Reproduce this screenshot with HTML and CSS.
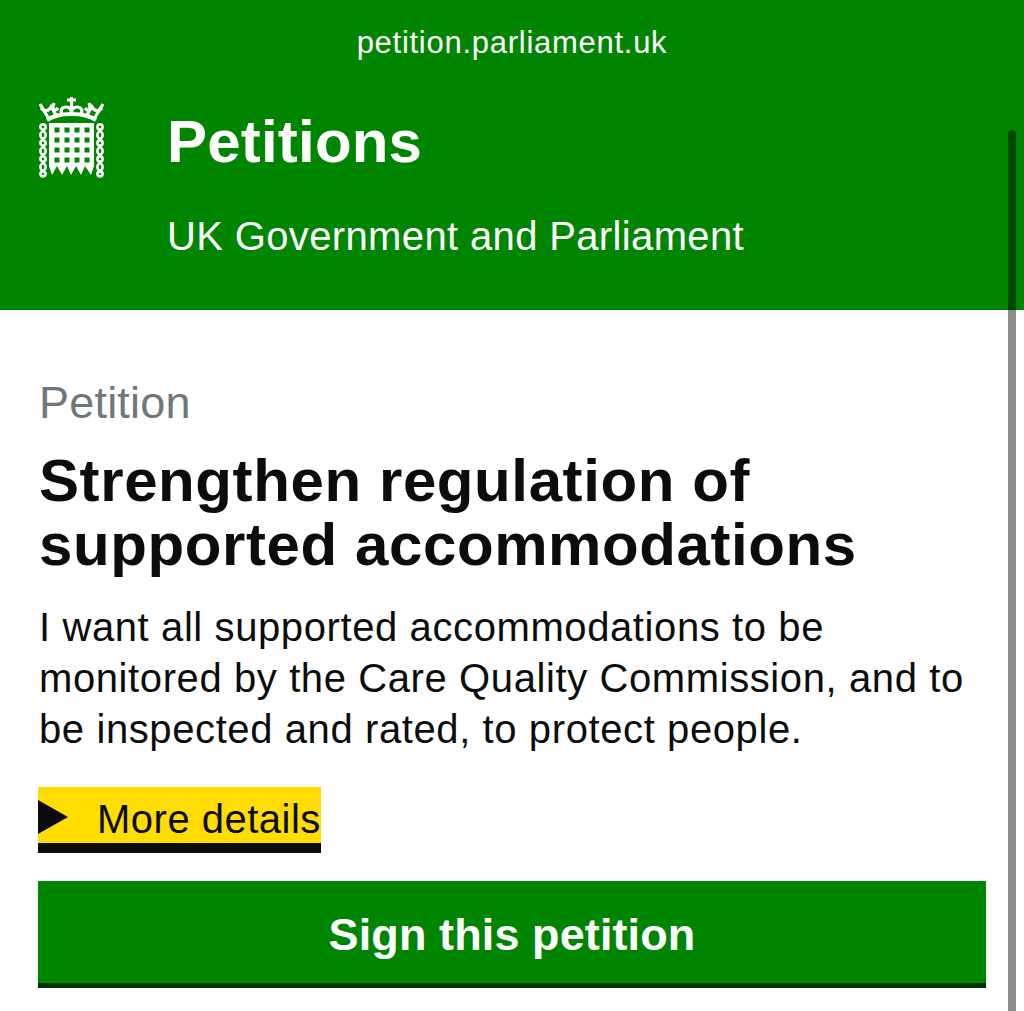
FILE: index.html
```html
<!DOCTYPE html>
<html lang="en">
<head>
<meta charset="utf-8">
<title>Petitions</title>
<link rel="stylesheet" href="styles.css">
</head>
<body>
<header class="site-header">
  <div class="url">petition.parliament.uk</div>
  <div class="brand">
    <svg class="logo" viewBox="0 0 68 84" aria-hidden="true">
      <g fill="none" stroke="#fff" stroke-width="3.2">
        <path d="M11 24C8 19 5 14 2 9M56 24C59 19 62 14 65 9"/>
        <path d="M33.500 2V19M29 5H38"/>
        <path d="M9 25C21 17 46 17 58 25" stroke-width="4"/>
        <path d="M19 21C15 17 14 13 16 8M48 21C52 17 53 13 51 8"/>
        <path d="M24 19C22 15 24 12 28 12C31 12 33 14 33.500 17C34 14 36 12 39 12C43 12 45 15 43 19"/>
        <path d="M3 13C6 17 11 16 13 12C15 16 18 16 20 13M47 13C49 16 52 16 54 12C56 16 61 17 64 13"/>
      </g>
      <g fill="none" stroke="#fff" stroke-width="2.6">
        <ellipse cx="5" cy="32" rx="2.6" ry="2.6"/><ellipse cx="5" cy="40" rx="2.6" ry="3.5"/>
        <ellipse cx="5" cy="48" rx="2.6" ry="2.6"/><ellipse cx="5" cy="56" rx="2.6" ry="3.5"/>
        <ellipse cx="5" cy="64" rx="2.6" ry="2.6"/><ellipse cx="5" cy="72" rx="2.6" ry="3.5"/>
        <ellipse cx="5" cy="79" rx="2.6" ry="2.4"/>
        <ellipse cx="62" cy="32" rx="2.6" ry="2.6"/><ellipse cx="62" cy="40" rx="2.6" ry="3.5"/>
        <ellipse cx="62" cy="48" rx="2.6" ry="2.6"/><ellipse cx="62" cy="56" rx="2.6" ry="3.5"/>
        <ellipse cx="62" cy="64" rx="2.6" ry="2.6"/><ellipse cx="62" cy="72" rx="2.6" ry="3.5"/>
        <ellipse cx="62" cy="79" rx="2.6" ry="2.4"/>
      </g>
      <path fill="#fff" fill-rule="evenodd" d="M11 28H56V71L53 80L47 71L43 80L38 71L33 80L29 71L24 80L19 71L14 80L11 71Z
        M16.500 32.500h5v5h-5zM26.500 32.500h5v5h-5zM36.500 32.500h5v5h-5zM46.500 32.500h5v5h-5z
        M16.500 42.500h5v5h-5zM26.500 42.500h5v5h-5zM36.500 42.500h5v5h-5zM46.500 42.500h5v5h-5z
        M16.500 52.500h5v5h-5zM26.500 52.500h5v5h-5zM36.500 52.500h5v5h-5zM46.500 52.500h5v5h-5z
        M16.500 62.500h5v5h-5zM26.500 62.500h5v5h-5zM36.500 62.500h5v5h-5zM46.500 62.500h5v5h-5z"/>
    </svg>
    <div class="brand-text">
      <div class="brand-title">Petitions</div>
      <div class="brand-sub">UK Government and Parliament</div>
    </div>
  </div>
</header>
<main class="content">
  <div class="label">Petition</div>
  <h1 class="title">Strengthen regulation of supported accommodations</h1>
  <p class="summary">I want all supported accommodations to be monitored by the Care Quality Commission, and to be inspected and rated, to protect people.</p>
  <a class="details" href="#"><span class="arrow"></span><span class="details-text">More details</span></a>
  <a class="sign" href="#">Sign this petition</a>
</main>
<div class="scrollbar"></div>
</body>
</html>
```
FILE: styles.css
```css
* { box-sizing: border-box; }
html, body { margin: 0; height: 100%; }
body {
  position: relative;
  height: 1011px;
  overflow: hidden;
  background: #fff;
  color: #0b0c0c;
  font-family: "Liberation Sans", Arial, sans-serif;
}
.site-header {
  height: 310px;
  background: #008500;
  color: #fff;
  padding-top: 26px;
}
.url {
  text-align: center;
  font-size: 31px;
  letter-spacing: 0.73px;
  line-height: 34px;
}
.brand {
  display: flex;
  margin-top: 35px;
  padding-left: 38px;
}
.logo {
  width: 68px;
  height: 84px;
  flex: none;
}
.brand-text { margin-left: 61px; }
.brand-title {
  font-size: 60px;
  letter-spacing: 0.2px;
  font-weight: 700;
  line-height: 70px;
  margin-top: 12px;
}
.brand-sub {
  font-size: 40px;
  letter-spacing: 0.36px;
  line-height: 46px;
  margin-top: 36px;
}
.content { padding: 68px 38px 0; }
.label {
  color: #6f777b;
  font-size: 45px;
  letter-spacing: 0.2px;
  line-height: 50px;
  padding-left: 1px;
}
.title {
  margin: 21px 0 0;
  padding-left: 1px;
  font-size: 60px;
  font-weight: 700;
  letter-spacing: 0.6px;
  line-height: 64px;
}
.summary {
  margin: 25px 0 0;
  padding-left: 1px;
  font-size: 40px;
  letter-spacing: 0.6px;
  line-height: 51px;
}
.details {
  display: inline-flex;
  align-items: center;
  margin-top: 32px;
  height: 66px;
  padding-top: 4px;
  background: #ffdd00;
  border-bottom: 10px solid #0b0c0c;
  color: #0b0c0c;
  font-size: 40px;
  letter-spacing: 0.5px;
  text-decoration: none;
  vertical-align: top;
}
.details-text { padding-top: 4px; }
.arrow {
  width: 0;
  height: 0;
  margin-right: 29px;
  border-left: 30px solid #0b0c0c;
  border-top: 17px solid transparent;
  border-bottom: 17px solid transparent;
}
.sign {
  display: block;
  margin-top: 28px;
  width: 948px;
  height: 107px;
  padding-top: 28px;
  background: #008500;
  border-bottom: 5px solid #003300;
  color: #fff;
  font-size: 45px;
  letter-spacing: 0.1px;
  line-height: 52px;
  font-weight: 700;
  text-align: center;
  text-decoration: none;
}
.scrollbar {
  position: absolute;
  top: 130px;
  right: 8px;
  bottom: 0;
  width: 8px;
  border-radius: 4px 4px 0 0;
  background: rgba(0, 0, 0, 0.45);
}
```
